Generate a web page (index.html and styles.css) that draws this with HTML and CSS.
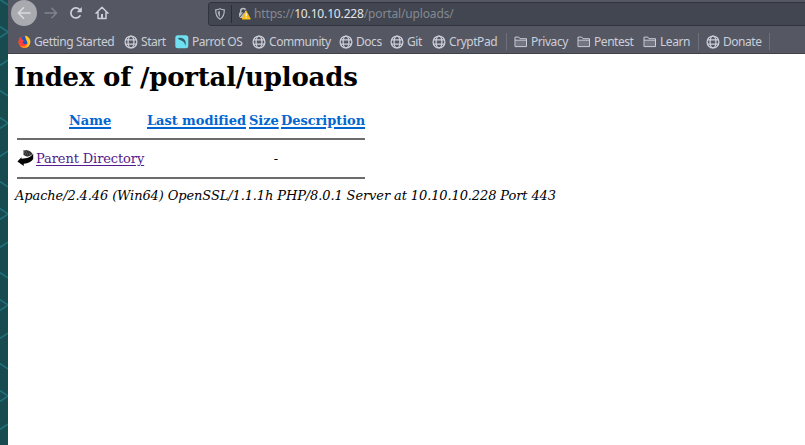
FILE: index.html
```
<!DOCTYPE html>
<html lang="en">
<head>
<meta charset="utf-8">
<title>Index of /portal/uploads</title>
<link rel="stylesheet" href="styles.css">
</head>
<body>
<svg class="defs" width="0" height="0" aria-hidden="true">
  <symbol id="globe" viewBox="0 0 14 14"><g fill="none" stroke="currentColor" stroke-width="1.3"><circle cx="7" cy="7" r="5.9"/><ellipse cx="7" cy="7" rx="2.9" ry="5.9"/><path d="M1.6 4.8h10.8M1.6 9.2h10.8"/></g></symbol>
  <symbol id="folder" viewBox="0 0 14 14"><path d="M1 11.6V2.1h3.8l1.2 1.6h6.5v7.9zM1 5.2h11.5" fill="none" stroke="currentColor" stroke-width="1" stroke-linejoin="round"/><path d="M1.5 5.5h10.5v5.6H1.5z" fill="currentColor" opacity=".25"/></symbol>
</svg>
<div class="screen">
  <svg class="desktop" width="8" height="445">
    <defs><pattern id="net" width="8" height="91" patternUnits="userSpaceOnUse" y="0"><path d="M0 -.5L8 5M0 26.5L8 32L0 37.5M8 60L0 65.5M0 90.5L8 96" fill="none" stroke="#1f727c" stroke-width="1.5"/></pattern></defs>
    <rect width="8" height="445" fill="#174b50"/><rect width="8" height="445" fill="url(#net)"/>
  </svg>
  <div class="browser">
    <header class="chrome">
      <div class="toolbar">
        <span class="back"><svg width="26" height="26" viewBox="0 0 26 26"><path d="M19 13H7.5M12.5 7.8L7.3 13l5.2 5.2" fill="none" stroke="#d9dade" stroke-width="1.6" stroke-linecap="round" stroke-linejoin="round"/></svg></span>
        <svg class="forward" width="14" height="14" viewBox="0 0 14 14"><path d="M1 7h11.5M7.8 2.2L12.6 7l-4.8 4.8" fill="none" stroke="#81848e" stroke-width="1.4" stroke-linecap="round" stroke-linejoin="round"/></svg>
        <svg class="reload" width="14" height="14" viewBox="0 0 14 14"><path d="M11 9.8A5 5 0 1 1 10.5 3.5" fill="none" stroke="#cdd0d8" stroke-width="1.7" stroke-linecap="round"/><path d="M12.8 1v5.2H7.6z" fill="#cdd0d8"/></svg>
        <svg class="home" width="14" height="14" viewBox="0 0 14 14"><path d="M1 7.2L7 1.3l6 5.9M3 6.5v6h8v-6" fill="none" stroke="#cdd0d8" stroke-width="1.5" stroke-linecap="round" stroke-linejoin="round"/><path d="M6 8h2v4.5H6z" fill="#cdd0d8"/></svg>
        <div class="urlbar">
          <svg class="shield" width="12" height="12" viewBox="0 0 12 12"><path d="M1.7 1.8C3.5 1.7 4.7 1.4 6 .8c1.3.6 2.5.9 4.3 1 .1 4.3-.8 7.5-4.3 9.4C2.5 9.3 1.6 6.1 1.7 1.8z" fill="none" stroke="#b5b8c0" stroke-width="1.2"/><path d="M6 3v6C4.5 8 3.8 6 3.8 3.6z" fill="#a5a8b0"/></svg>
          <span class="divider"></span>
          <svg class="lock" width="13" height="13" viewBox="0 0 13 13"><path d="M2.7 6V4a2.5 2.5 0 0 1 5 0v2" fill="none" stroke="#b9bcc3" stroke-width="1.5"/><rect x="1" y="5.5" width="8" height="5.5" rx=".8" fill="#b9bcc3"/><path d="M1 11L9.5 1" stroke="#424650" stroke-width="1"/><path d="M8.2 4.2L12.3 12H4.2z" fill="#ffbd10" stroke="#ffbd10" stroke-linejoin="round"/><path d="M8.2 6.3v3M8.2 10.3v1" stroke="#fff" stroke-width="1.1"/></svg>
          <span class="url">https://<b>10.10.10.228</b>/portal/uploads/</span>
        </div>
      </div>
      <nav class="bookmarks">
        <a><svg width="14" height="14" viewBox="0 0 14 14"><circle cx="6.3" cy="7.2" r="5.8" fill="#ff5a27"/><circle cx="6.5" cy="5.600" r="4.200" fill="#2056b8"/><path d="M7.300.5c4 1.500 5.500 4.300 5 7.300-.5 3-2.700 5-5.600 5 1.500-1 3-2.800 2.800-4.800C9.400 6 7 4 7.300.5z" fill="#ffc928"/><path d="M1.800 2C3 3 3.500 4 5.800 5.300L4.600 7.500c.8 1.600 2.600 2 4.400 1.200-.8 2.500-3 3.300-5.200 2.600C.5 9.500-.2 5.500 1.800 2z" fill="#ff3f3c"/><path d="M2.500 10.500c2.500 1.500 5 1 6.500-1.500 1 2-1 3.800-3 3.900-1.500-.1-2.700-1-3.500-2.400z" fill="#ff9418"/></svg><span>Getting Started</span></a>
        <a><svg><use href="#globe"/></svg><span>Start</span></a>
        <a><svg width="14" height="14" viewBox="0 0 14 14"><rect x=".3" y=".3" width="13" height="13" rx="2.5" fill="#70e0f0"/><path d="M3 3c3.500-1 6.800.6 7.500 3.600.4 1.500.2 3 .2 4.200C9.800 9 9.200 7.400 8 6.600L6.300 5.400 3.800 4.500z" fill="#35636e"/></svg><span>Parrot OS</span></a>
        <a><svg><use href="#globe"/></svg><span>Community</span></a>
        <a><svg><use href="#globe"/></svg><span>Docs</span></a>
        <a><svg><use href="#globe"/></svg><span>Git</span></a>
        <a><svg><use href="#globe"/></svg><span>CryptPad</span></a>
        <i></i>
        <a><svg><use href="#folder"/></svg><span>Privacy</span></a>
        <a><svg><use href="#folder"/></svg><span>Pentest</span></a>
        <a><svg><use href="#folder"/></svg><span>Learn</span></a>
        <i></i>
        <a><svg><use href="#globe"/></svg><span>Donate</span></a>
        <i></i>
      </nav>
    </header>
    <main>
      <h1>Index of /portal/uploads</h1>
      <div class="listing">
        <div class="row head"><span></span><a class="name">Name</a><a>Last modified</a><a>Size</a><a>Description</a></div>
        <hr>
        <div class="row entry">
          <svg width="17" height="17" viewBox="0 0 17 17"><path d="M6.5 0l1.500.5 1-.5c3 .4 5.500 1.700 6.500 4-2 2.300-4 2.500-6 2.500L6.500 5z" fill="#333"/><path d="M7 2h4M8 4h5" stroke="#888" stroke-width=".7" stroke-dasharray="1 1"/><path d="M16.200 3.500V9c-1.500 2.600-5 4.200-9.500 4.800L6.800 16 .4 11.500 4.500 7.300v1.400C9.500 8.800 14 7 16.200 3.500z" fill="#050505"/></svg>
          <a class="parent">Parent Directory</a><span></span><span class="size">-</span><span></span>
        </div>
        <hr>
      </div>
      <address>Apache/2.4.46 (Win64) OpenSSL/1.1.1h PHP/8.0.1 Server at 10.10.10.228 Port 443</address>
    </main>
  </div>
</div>
</body>
</html>
```
FILE: styles.css
```
* { box-sizing: border-box; }
body { margin: 0; background: #fff; overflow: hidden; }
svg { display: block; flex: none; }
.defs { position: absolute; }
.screen { display: flex; width: 805px; height: 445px; overflow: hidden; }
.desktop { flex: none; }
.browser { flex: 1; min-width: 0; }
.chrome { height: 54px; background: #555863; border-bottom: 1px solid #3f424b; font-family: "Noto Sans", sans-serif; }
.toolbar { display: flex; align-items: center; height: 26px; padding-left: 3px; }
.back { width: 26px; height: 26px; border-radius: 50%; background: #a9aab0; }
.forward { margin-left: 7px; }
.reload { margin-left: 11px; }
.home { margin-left: 12px; }
.urlbar { display: flex; align-items: center; flex: 1; height: 24px; margin: 1px -4px 0 99px; padding-left: 5px; background: #424650; border: 1px solid #30343d; border-radius: 3px; }
.divider { width: 1px; height: 18px; margin-left: 5px; background: #292d36; }
.lock { margin-left: 6px; }
.url { margin-left: 3px; font-size: 12px; line-height: 20px; letter-spacing: -.15px; color: #858992; white-space: nowrap; }
.url b { font-weight: 400; color: #e2e4e8; }
.bookmarks { display: grid; grid-template-columns: 106px 51px 77px 87px 51px 42px 74px 8px 63px 66px 55px 8px 63px 1px; align-items: center; height: 27px; margin-top: 2px; padding-left: 10px; }
.bookmarks a { display: flex; align-items: center; gap: 3px; color: #cbced8; font-size: 12px; line-height: 18px; letter-spacing: -.45px; white-space: nowrap; }
.bookmarks a:first-child { gap: 2px; letter-spacing: -.4px; }
.bookmarks svg { width: 14px; height: 14px; }
.bookmarks i { width: 1px; height: 17px; background: #6d707b; }
main { padding: 0 7px; color: #000; font-family: "DejaVu Serif", serif; font-size: 13px; letter-spacing: -.11px; }
h1 { margin: 7px 0 0 -1px; font-size: 26px; line-height: 32px; letter-spacing: -.22px; white-space: nowrap; }
.listing { width: 348px; margin: 17px 0 0 2px; }
.row { display: grid; grid-template-columns: 19px 111px 102px 32px 84px; align-items: center; white-space: nowrap; }
.head { height: 20px; color: #0366d0; font-weight: 700; letter-spacing: -.06px; }
.row a { text-decoration: underline; text-underline-offset: 2px; }
.head a { text-decoration-thickness: 1.5px; }
.name { padding-left: 33px; }
.entry { height: 17px; }
.row .parent { color: #551a8b; }
.size { text-align: right; padding-right: 3px; }
hr { height: 2px; margin: 8px 0 10px; border: 0; background: #6c6c6c; }
.entry + hr { margin: 10px 0 0; }
address { margin-top: 8px; line-height: 17px; white-space: nowrap; }
```
